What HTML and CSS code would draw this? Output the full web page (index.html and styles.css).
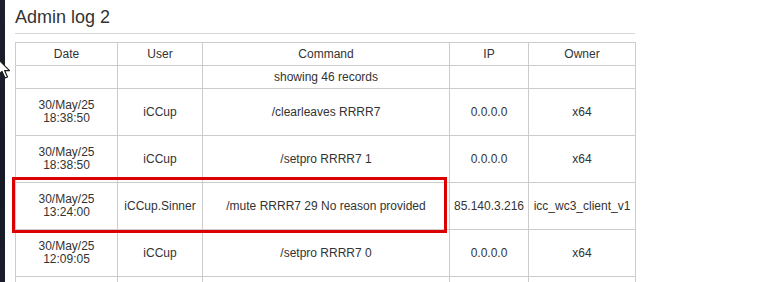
FILE: index.html
```html
<!DOCTYPE html>
<html>
<head>
<meta charset="utf-8">
<link rel="stylesheet" href="styles.css">
</head>
<body>
<div class="page">
  <div class="side"></div>
  <div class="main">
    <h3 class="title">Admin log 2</h3>
    <div class="table-wrap">
      <table class="log">
        <colgroup>
          <col class="c-date"><col class="c-user"><col class="c-cmd"><col class="c-ip"><col class="c-owner">
        </colgroup>
        <tr class="single"><td>Date</td><td>User</td><td>Command</td><td>IP</td><td>Owner</td></tr>
        <tr class="single"><td></td><td></td><td>showing 46 records</td><td></td><td></td></tr>
        <tr class="double"><td>30/May/25<br>18:38:50</td><td>iCCup</td><td>/clearleaves RRRR7</td><td>0.0.0.0</td><td>x64</td></tr>
        <tr class="double"><td>30/May/25<br>18:38:50</td><td>iCCup</td><td>/setpro RRRR7 1</td><td>0.0.0.0</td><td>x64</td></tr>
        <tr class="double"><td>30/May/25<br>13:24:00</td><td>iCCup.Sinner</td><td>/mute RRRR7 29 No reason provided</td><td>85.140.3.216</td><td>icc_wc3_client_v1</td></tr>
        <tr class="double"><td>30/May/25<br>12:09:05</td><td>iCCup</td><td>/setpro RRRR7 0</td><td>0.0.0.0</td><td>x64</td></tr>
        <tr class="double"><td></td><td></td><td></td><td></td><td></td></tr>
      </table>
      <div class="highlight"></div>
    </div>
  </div>
  <svg class="cursor" width="14" height="22" viewBox="0 0 14 22">
    <path d="M1 1 L1 17 L5 13.5 L8 20 L10.5 19 L7.6 12.6 L12.5 12.6 Z" fill="#ffffff" stroke="#1a1a1a" stroke-width="1.2" stroke-linejoin="round"/>
  </svg>
</div>
</body>
</html>
```
FILE: styles.css
```css
html, body {
  margin: 0;
  padding: 0;
  background: #ffffff;
}
.page {
  position: relative;
  display: flex;
  height: 282px;
  overflow: hidden;
  font-family: "Liberation Sans", Arial, sans-serif;
  color: #333333;
}
.side {
  width: 5px;
  flex: 0 0 5px;
  background: linear-gradient(180deg, #1c1f2d 0%, #161926 60%, #1a1d2a 100%);
}
.main {
  padding-left: 10px;
}
.title {
  margin: 0;
  width: 620px;
  padding: 7px 0 6px 0;
  font-size: 18px;
  line-height: 20px;
  font-weight: normal;
  border-bottom: 1px solid #d6d6d6;
}
.table-wrap {
  position: relative;
  margin-top: 8px;
}
.log {
  border-collapse: collapse;
  table-layout: fixed;
  width: 620px;
  font-size: 12px;
  line-height: 13px;
}
.c-date { width: 102px; }
.c-user { width: 85px; }
.c-cmd { width: 247px; }
.c-ip { width: 79px; }
.c-owner { width: 107px; }
.log td {
  border: 1px solid #cccccc;
  padding: 0 2px;
  text-align: center;
  vertical-align: middle;
  white-space: nowrap;
}
.single td { height: 22px; }
.double td { height: 46px; }
.highlight {
  position: absolute;
  left: -3px;
  top: 135px;
  width: 429px;
  height: 50px;
  border: 3px solid #dc0000;
}
.cursor {
  position: absolute;
  left: -3px;
  top: 58px;
}
```
